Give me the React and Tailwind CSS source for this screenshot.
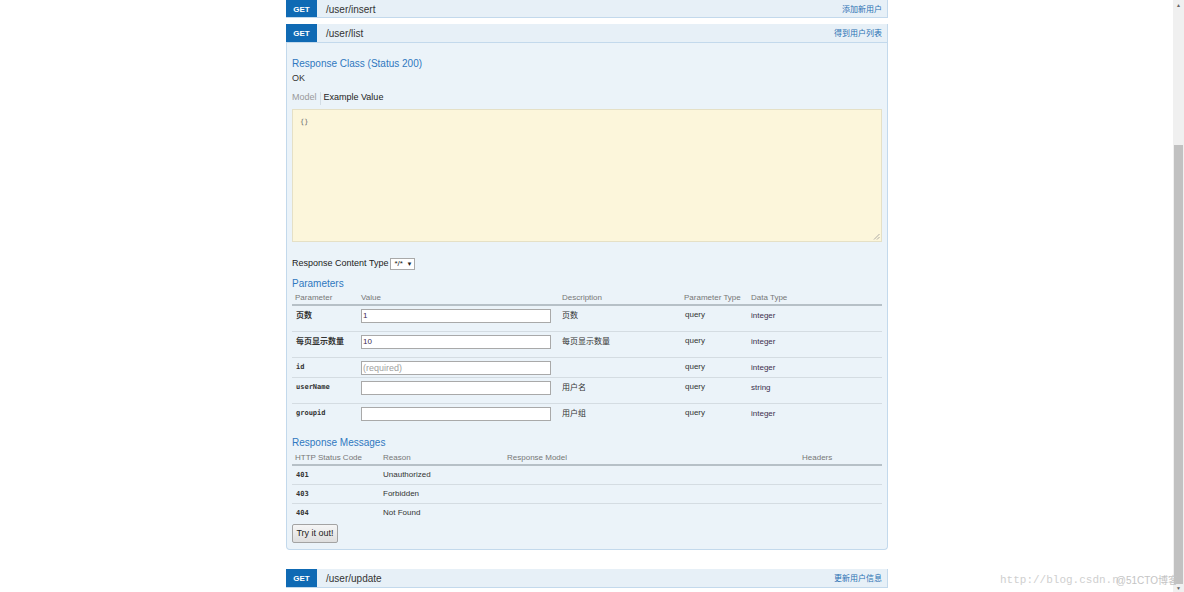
import React from "react";

const sans = "font-['Liberation_Sans','Noto_Sans_CJK_SC',Arial,sans-serif]";
const mono = "font-['DejaVu_Sans_Mono','Noto_Sans_CJK_SC',monospace]";

function Bar({ path, summary, h }) {
  return (
    <div className={`flex items-center bg-[#e7f0f7] border border-t-0 border-[#c3d9ec] ${h}`}>
      <div className="w-[31px] h-full pt-[2px] bg-[#0f6ab4] text-white text-[8px] font-bold flex items-center justify-center -ml-px">
        GET
      </div>
      <div className="ml-[9px] mt-[2px] text-[10px] text-[#333] leading-none">{path}</div>
      <div className="ml-auto mr-[5px] mt-[2px] text-[8px] text-[#2a70b3] leading-none">{summary}</div>
    </div>
  );
}

function Input({ value, placeholder }) {
  return (
    <div className="w-[190px] h-[14px] border border-[#a9a9a9] bg-white flex items-center pl-px">
      {value ? (
        <span className="text-[8px] text-[#3b2a50] leading-none">{value}</span>
      ) : placeholder ? (
        <span className="text-[9px] text-[#a0a0a0] leading-none">{placeholder}</span>
      ) : null}
    </div>
  );
}

const params = [
  { name: "页数", cjk: true, value: "1", desc: "页数", type: "integer", h: "h-[26px]" },
  { name: "每页显示数量", cjk: true, value: "10", desc: "每页显示数量", type: "integer", h: "h-[26px]" },
  { name: "id", placeholder: "(required)", desc: "", type: "integer", h: "h-[20px]" },
  { name: "userName", desc: "用户名", type: "string", h: "h-[26px]" },
  { name: "groupid", desc: "用户组", type: "integer", h: "h-[24px]", last: true },
];

const msgs = [
  { code: "401", reason: "Unauthorized" },
  { code: "403", reason: "Forbidden" },
  { code: "404", reason: "Not Found", last: true },
];

export default function App() {
  return (
    <div className={`relative w-[1184px] h-[592px] overflow-hidden bg-white flex ${sans}`}>
      <div className="flex-1">
        <div className="ml-[286px] w-[602px]">
          <Bar path="/user/insert" summary="添加新用户" h="h-[18px]" />
          <div className="h-[6px]" />
          <Bar path="/user/list" summary="得到用户列表" h="h-[19px]" />

          {/* expanded panel */}
          <div className="bg-[#ebf3f9] border border-t-0 border-[#c3d9ec] rounded-b-[4px] px-[5px] pt-[15px] pb-[6px]">
            <div className="text-[10px] leading-[12px] text-[#2f78c0]">Response Class (Status 200)</div>
            <div className="mt-[2px] text-[9px] leading-[12px] text-[#333]">OK</div>
            <div className="mt-[8px] flex items-center h-[12px] text-[9px]">
              <span className="text-[#999]">Model</span>
              <span className="mx-[3px] w-px h-[13px] bg-[#d3dde5]" />
              <span className="text-[#222]">Example Value</span>
            </div>
            <div className="mt-[5px] h-[133px] bg-[#fcf6db] border border-[#e5e0c6] relative">
              <div className={`${mono} text-[7px] text-[#666] pl-[7px] pt-[9px] leading-none`}>{"{}"}</div>
              <svg className="absolute right-[1px] bottom-[1px]" width="7" height="7" viewBox="0 0 7 7">
                <line x1="6.5" y1="1" x2="1" y2="6.5" stroke="#999" strokeWidth="0.8" />
                <line x1="6.5" y1="4" x2="4" y2="6.5" stroke="#999" strokeWidth="0.8" />
              </svg>
            </div>
            <div className="mt-[16px] flex items-center h-[12px]">
              <span className="text-[9px] text-[#222]">Response Content Type</span>
              <div className="ml-[2px] w-[25px] h-[12px] border border-[#a9a9a9] bg-white flex items-center justify-between pl-[3px] pr-[2px]">
                <span className="text-[8px] leading-none text-[#222]">*/*</span>
                <span className="text-[6px] leading-none text-[#222]">▼</span>
              </div>
            </div>
            <div className="mt-[8px] text-[10px] leading-[12px] text-[#2f78c0]">Parameters</div>

            {/* params table */}
            <div>
              <div className="flex h-[16px] pt-[2px] items-center border-b-2 border-[#b6c0c7] text-[8px] text-[#777]">
                <div className="w-[66px] pl-[3px]">Parameter</div>
                <div className="w-[201px] pl-[3px]">Value</div>
                <div className="w-[122px] pl-[3px]">Description</div>
                <div className="w-[67px] pl-[3px]">Parameter Type</div>
                <div className="flex-1 pl-[3px]">Data Type</div>
              </div>
              {params.map((p) => (
                <div
                  key={p.name}
                  className={`flex ${p.h} pt-[3px] ${p.last ? "" : "border-b border-[#d4dce2]"}`}
                >
                  {p.cjk ? (
                    <div className={`w-[66px] pl-[4px] ${sans} text-[8px] font-bold leading-[13px] text-[#333]`}>{p.name}</div>
                  ) : (
                    <div className={`w-[66px] pl-[4px] ${mono} text-[7px] font-bold leading-[12px] text-[#333]`}>{p.name}</div>
                  )}
                  <div className="w-[201px] pl-[3px]">
                    <Input value={p.value} placeholder={p.placeholder} />
                  </div>
                  <div className="w-[122px] pl-[3px] text-[8px] leading-[14px] text-[#333]">{p.desc}</div>
                  <div className="w-[67px] pl-[4px] text-[8px] leading-[12px] text-[#333]">query</div>
                  <div className="flex-1 pl-[3px] text-[8px] leading-[14px] text-[#3d2f4d]">{p.type}</div>
                </div>
              ))}
            </div>

            <div className="mt-[9px] text-[10px] leading-[12px] text-[#2f78c0]">Response Messages</div>
            <div className="mt-[1px]">
              <div className="flex h-[16px] pt-[2px] items-center border-b-2 border-[#b6c0c7] text-[8px] text-[#777]">
                <div className="w-[88px] pl-[3px]">HTTP Status Code</div>
                <div className="w-[124px] pl-[3px]">Reason</div>
                <div className="w-[295px] pl-[3px]">Response Model</div>
                <div className="flex-1 pl-[3px]">Headers</div>
              </div>
              {msgs.map((m) => (
                <div
                  key={m.code}
                  className={`flex items-center ${m.last ? "h-[18px]" : "h-[19px] border-b border-[#d4dce2]"}`}
                >
                  <div className={`w-[88px] pl-[4px] ${mono} text-[7px] font-bold text-[#333]`}>{m.code}</div>
                  <div className="w-[124px] pl-[3px] text-[8px] text-[#333]">{m.reason}</div>
                  <div className="flex-1" />
                </div>
              ))}
            </div>
            <button className="block mt-[2px] h-[19px] w-[46px] border border-[#a3a3a3] rounded-[2px] bg-gradient-to-b from-[#f6f6f6] to-[#dedede] text-[9px] text-[#222] leading-none">
              Try it out!
            </button>
          </div>

          <div className="h-[19px]" />
          <Bar path="/user/update" summary="更新用户信息" h="h-[19px]" />
        </div>
      </div>

      {/* scrollbar */}
      <div className="w-[11px] h-full bg-[#f0f0f0] flex flex-col items-center">
        <div className="h-[10px] flex items-center justify-center text-[5px] text-[#666] leading-none">▲</div>
        <div className="mt-[135px] w-[9px] flex-1 bg-[#c1c1c1]" />
        <div className="h-[8px] flex items-center justify-center text-[5px] text-[#666] leading-none">▼</div>
      </div>

      {/* watermark */}
      <div className="absolute z-10 left-[1000px] top-[572px] flex items-center whitespace-nowrap">
        <span className="font-['Liberation_Mono',monospace] text-[11px] text-[#cfcfcf]">http://blog.csdn.n</span>
        <span className="-ml-[3px] text-[10px] text-[#c4c4c4] font-['Liberation_Sans','Noto_Sans_CJK_SC',sans-serif]">@51CTO博客</span>
      </div>
    </div>
  );
}
